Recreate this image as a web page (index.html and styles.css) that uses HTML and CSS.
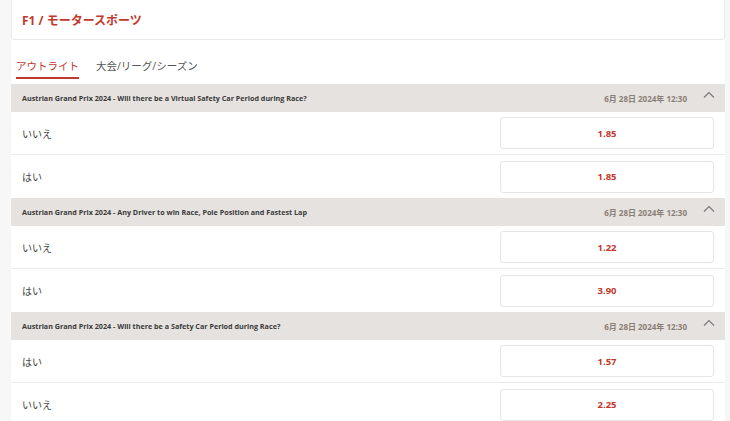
FILE: index.html
```html
<!DOCTYPE html>
<html lang="ja">
<head>
<meta charset="utf-8">
<link rel="stylesheet" href="styles.css">
</head>
<body>
<div class="page">
  <div class="title-card"><h1 class="title">F1 / モータースポーツ</h1></div>
  <div class="tabs">
    <div class="tab active">アウトライト</div>
    <div class="tab">大会/リーグ/シーズン</div>
  </div>
  <div class="markets">
    <div class="market">
      <div class="market-head">
        <span class="market-name">Austrian Grand Prix 2024 - Will there be a Virtual Safety Car Period during Race?</span>
        <span class="market-date">6月 28日 2024年 12:30</span>
        <svg class="chev" width="12" height="8" viewBox="0 0 12 8"><path d="M1 6.5 L6 1.5 L11 6.5" fill="none" stroke="#777" stroke-width="1.1"/></svg>
      </div>
      <div class="row"><span class="label">いいえ</span><div class="odds">1.85</div></div>
      <div class="row"><span class="label">はい</span><div class="odds">1.85</div></div>
    </div>
    <div class="market">
      <div class="market-head">
        <span class="market-name">Austrian Grand Prix 2024 - Any Driver to win Race, Pole Position and Fastest Lap</span>
        <span class="market-date">6月 28日 2024年 12:30</span>
        <svg class="chev" width="12" height="8" viewBox="0 0 12 8"><path d="M1 6.5 L6 1.5 L11 6.5" fill="none" stroke="#777" stroke-width="1.1"/></svg>
      </div>
      <div class="row"><span class="label">いいえ</span><div class="odds">1.22</div></div>
      <div class="row"><span class="label">はい</span><div class="odds">3.90</div></div>
    </div>
    <div class="market">
      <div class="market-head">
        <span class="market-name">Austrian Grand Prix 2024 - Will there be a Safety Car Period during Race?</span>
        <span class="market-date">6月 28日 2024年 12:30</span>
        <svg class="chev" width="12" height="8" viewBox="0 0 12 8"><path d="M1 6.5 L6 1.5 L11 6.5" fill="none" stroke="#777" stroke-width="1.1"/></svg>
      </div>
      <div class="row"><span class="label">はい</span><div class="odds">1.57</div></div>
      <div class="row"><span class="label">いいえ</span><div class="odds">2.25</div></div>
    </div>
  </div>
</div>
</body>
</html>
```

FILE: styles.css
```css
* { box-sizing: border-box; }
html, body { margin: 0; padding: 0; }
body {
  background: #f7f7f7;
  font-family: "Open Sans", "Noto Sans CJK JP", sans-serif;
  color: #333;
  overflow: hidden;
}
.page {
  margin-left: 11px;
  width: 714px;
  background: #fff;
  min-height: 421px;
}
.title-card {
  height: 40px;
  border: 1px solid #ebebeb;
  border-top: none;
  border-radius: 0 0 3px 3px;
  display: flex;
  align-items: center;
  padding-left: 10px;
  background: #fff;
}
.title {
  margin: 0;
  font-size: 12px;
  font-weight: 700;
  color: #c0392b;
}
.tabs {
  display: flex;
  gap: 17px;
  padding: 16px 0 0 5px;
  height: 44px;
  background: #fff;
}
.tab {
  font-size: 10.5px;
  color: #555;
  height: 23px;
  line-height: 20px;
}
.tab.active {
  color: #c0392b;
  border-bottom: 2px solid #c0392b;
}
.market-head {
  height: 28px;
  background: #e6e2df;
  display: flex;
  align-items: center;
  padding: 0 10px 0 11px;
}
.market-name {
  font-size: 7.2px;
  font-weight: 700;
  color: #3a3a3a;
  flex: 1;
}
.market-date {
  font-size: 8px;
  font-weight: 700;
  color: #8a7f78;
  margin-right: 16px;
}
.chev { margin-top: -6px; }
.row {
  height: 43px;
  display: flex;
  align-items: center;
  justify-content: space-between;
  padding: 0 11px;
  border-bottom: 1px solid #ececec;
}
.market .row:last-child { border-bottom: none; }
.label {
  font-size: 10px;
  color: #444;
}
.odds {
  width: 214px;
  height: 32px;
  border: 1px solid #e6e6e6;
  border-radius: 3px;
  display: flex;
  align-items: center;
  justify-content: center;
  font-size: 9.5px;
  font-weight: 700;
  color: #c0392b;
  background: #fff;
}
```
